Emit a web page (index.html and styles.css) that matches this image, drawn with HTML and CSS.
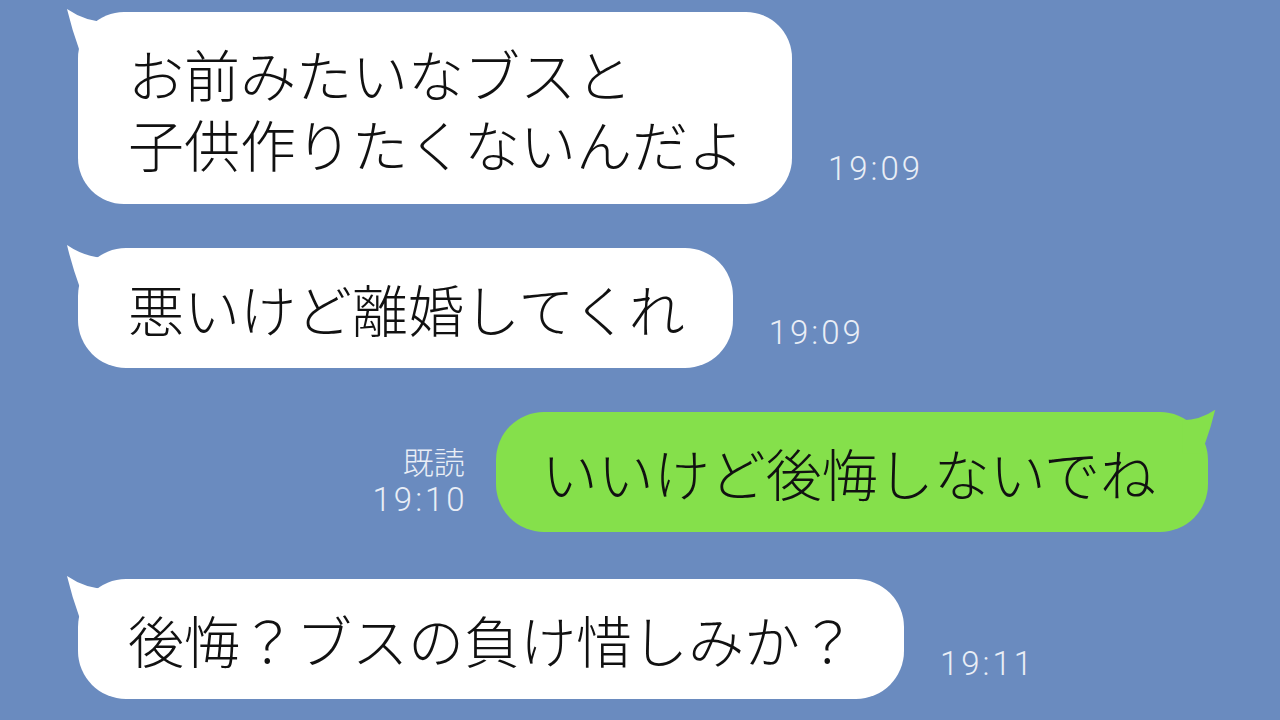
FILE: index.html
```html
<!DOCTYPE html>
<html lang="ja">
<head>
    <meta charset="UTF-8">
    <title>トーク</title>
    <link rel="stylesheet" href="styles.css">
</head>
<body>

<div class="chat">
    <!-- 相手 -->
    <div class="row">
        <div class="bubble left two">
            <svg class="tail" viewBox="0 0 60 60"><path d="M1 1 Q20 14 42 14 L42 56 L12 56 L14 44 Q6 22 1 1 Z"/></svg>
            お前みたいなブスと<br>子供作りたくないんだよ
        </div>
        <div class="time">19:09</div>
    </div>

    <div class="row">
        <div class="bubble left">
            <svg class="tail" viewBox="0 0 60 60"><path d="M1 1 Q20 14 42 14 L42 56 L12 56 L14 44 Q6 22 1 1 Z"/></svg>
            悪いけど離婚してくれ
        </div>
        <div class="time">19:09</div>
    </div>

    <!-- 自分 -->
    <div class="row mine">
        <div class="meta">
            <div class="read">既読</div>
            <div class="time">19:10</div>
        </div>
        <div class="bubble right">
            <svg class="tail" viewBox="0 0 60 60"><path d="M1 1 Q20 14 42 14 L42 56 L12 56 L14 44 Q6 22 1 1 Z"/></svg>
            いいけど後悔しないでね
        </div>
    </div>

    <div class="row last">
        <div class="bubble left">
            <svg class="tail" viewBox="0 0 60 60"><path d="M1 1 Q20 14 42 14 L42 56 L12 56 L14 44 Q6 22 1 1 Z"/></svg>
            後悔？ブスの負け惜しみか？
        </div>
        <div class="time">19:11</div>
    </div>
</div>

</body>
</html>
```

FILE: styles.css
```css
body {
    margin: 0;
    padding: 0;
    background-color: #6a8bbf;
    font-family: "Noto Sans CJK JP", sans-serif;
}

.chat {
    width: 1280px;
    height: 720px;
    overflow: hidden;
    padding-top: 12px;
    box-sizing: border-box;
}

.row {
    display: flex;
    align-items: flex-end;
    margin-bottom: 44px;
    padding-left: 78px;
}

.row.mine {
    padding-left: 0;
    padding-right: 72px;
    justify-content: flex-end;
    margin-bottom: 47px;
}

.bubble {
    position: relative;
    background-color: #fff;
    color: #111;
    font-size: 56px;
    font-weight: 300;
    line-height: 70px;
    white-space: nowrap;
    padding: 25px 48px 25px 50px;
    border-radius: 48px;
}

.bubble.two {
    padding: 26px 48px 26px 50px;
    border-radius: 46px;
}

.bubble.right {
    background-color: #85e04b;
    padding: 25px 52px 25px 46px;
}

.tail {
    position: absolute;
    top: -4px;
    left: -12px;
    width: 60px;
    height: 60px;
    fill: #fff;
}

.bubble.right .tail {
    left: auto;
    right: -8px;
    top: -3px;
    width: 48px;
    height: 48px;
    transform: scaleX(-1);
    fill: #85e04b;
}

.time {
    color: #e9eef6;
    font-family: Roboto, sans-serif;
    font-weight: 300;
    font-size: 33px;
    letter-spacing: 3px;
    line-height: 38px;
    margin-left: 36px;
    margin-bottom: 16px;
}

.meta {
    text-align: right;
    margin-right: 31px;
    margin-bottom: 13px;
    color: #e9eef6;
}

.meta .read {
    font-family: "Noto Sans CJK JP", sans-serif;
    font-weight: 300;
    font-size: 31px;
    line-height: 40px;
}

.meta .time {
    margin: 0 -3px 0 0;
}
```
